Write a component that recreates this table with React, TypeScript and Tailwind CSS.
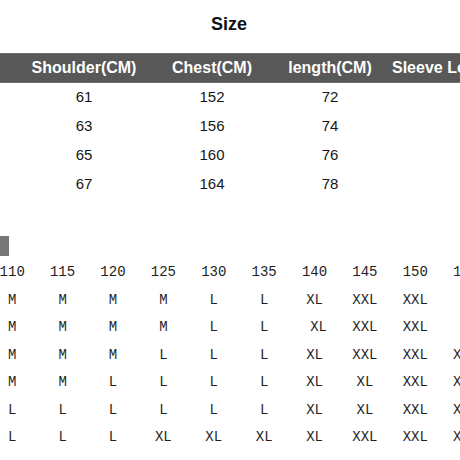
import React from "react";

const top = [
  ["61", "152", "72"],
  ["63", "156", "74"],
  ["65", "160", "76"],
  ["67", "164", "78"],
];

const heights = ["110", "115", "120", "125", "130", "135", "140", "145", "150", "155"];
const rows: string[][] = [
  ["M", "M", "M", "M", "L", "L", "XL", "XXL", "XXL", ""],
  ["M", "M", "M", "M", "L", "L", "XL*", "XXL", "XXL", ""],
  ["M", "M", "M", "L", "L", "L", "XL", "XXL", "XXL", "XXL"],
  ["M", "M", "L", "L", "L", "L", "XL", "XL", "XXL", "XXL"],
  ["L", "L", "L", "L", "L", "L", "XL", "XL", "XXL", "XXL"],
  ["L", "L", "L", "XL", "XL", "XL", "XL", "XXL", "XXL", "XXL"],
];

export default function App() {
  return (
    <div className="w-[460px] h-[460px] bg-white overflow-hidden relative" style={{ fontFamily: '"Liberation Sans", Arial, sans-serif' }}>
      <div className="h-[53px] flex items-center justify-center pb-[4px]">
        <span className="text-[18px] font-bold text-[#111] ml-[-2px]">Size</span>
      </div>
      <div className="h-[30px] bg-[#585858] border-t border-b border-[#6e6e6e] flex items-center whitespace-nowrap text-white font-bold text-[16px]">
        <div className="w-[144px] pl-[24px] text-center shrink-0">Shoulder(CM)</div>
        <div className="w-[136px] text-center shrink-0">Chest(CM)</div>
        <div className="w-[100px] text-center shrink-0">length(CM)</div>
        <div className="pl-[12px] shrink-0">Sleeve Length(CM)</div>
      </div>
      <div className="flex flex-col text-[15px] text-[#161616]">
        {top.map((r, i) => (
          <div key={i} className="h-[29px] flex items-center">
            <div className="w-[144px] pl-[24px] text-center shrink-0">{r[0]}</div>
            <div className="w-[136px] text-center shrink-0">{r[1]}</div>
            <div className="w-[100px] text-center shrink-0">{r[2]}</div>
          </div>
        ))}
      </div>
      <div className="mt-[37px] w-[9px] h-[20px] bg-[#767676]" />
      <div
        className="mt-[3px] ml-[-13px] flex flex-col text-[14px] text-[#1e1e1e]"
        style={{ fontFamily: '"Liberation Mono", "Courier New", monospace' }}
      >
        <div className="h-[27.5px] flex items-center">
          {heights.map((h) => (
            <div key={h} className="w-[50.4px] shrink-0 text-center">{h}</div>
          ))}
        </div>
        {rows.map((r, i) => (
          <div key={i} className="h-[27.5px] flex items-center">
            {r.map((c, j) => (
              <div key={j} className={"w-[50.4px] shrink-0 text-center " + (c === "XL*" ? "pl-[8px]" : "")}>
                {c.replace("*", "")}
              </div>
            ))}
          </div>
        ))}
      </div>
    </div>
  );
}
